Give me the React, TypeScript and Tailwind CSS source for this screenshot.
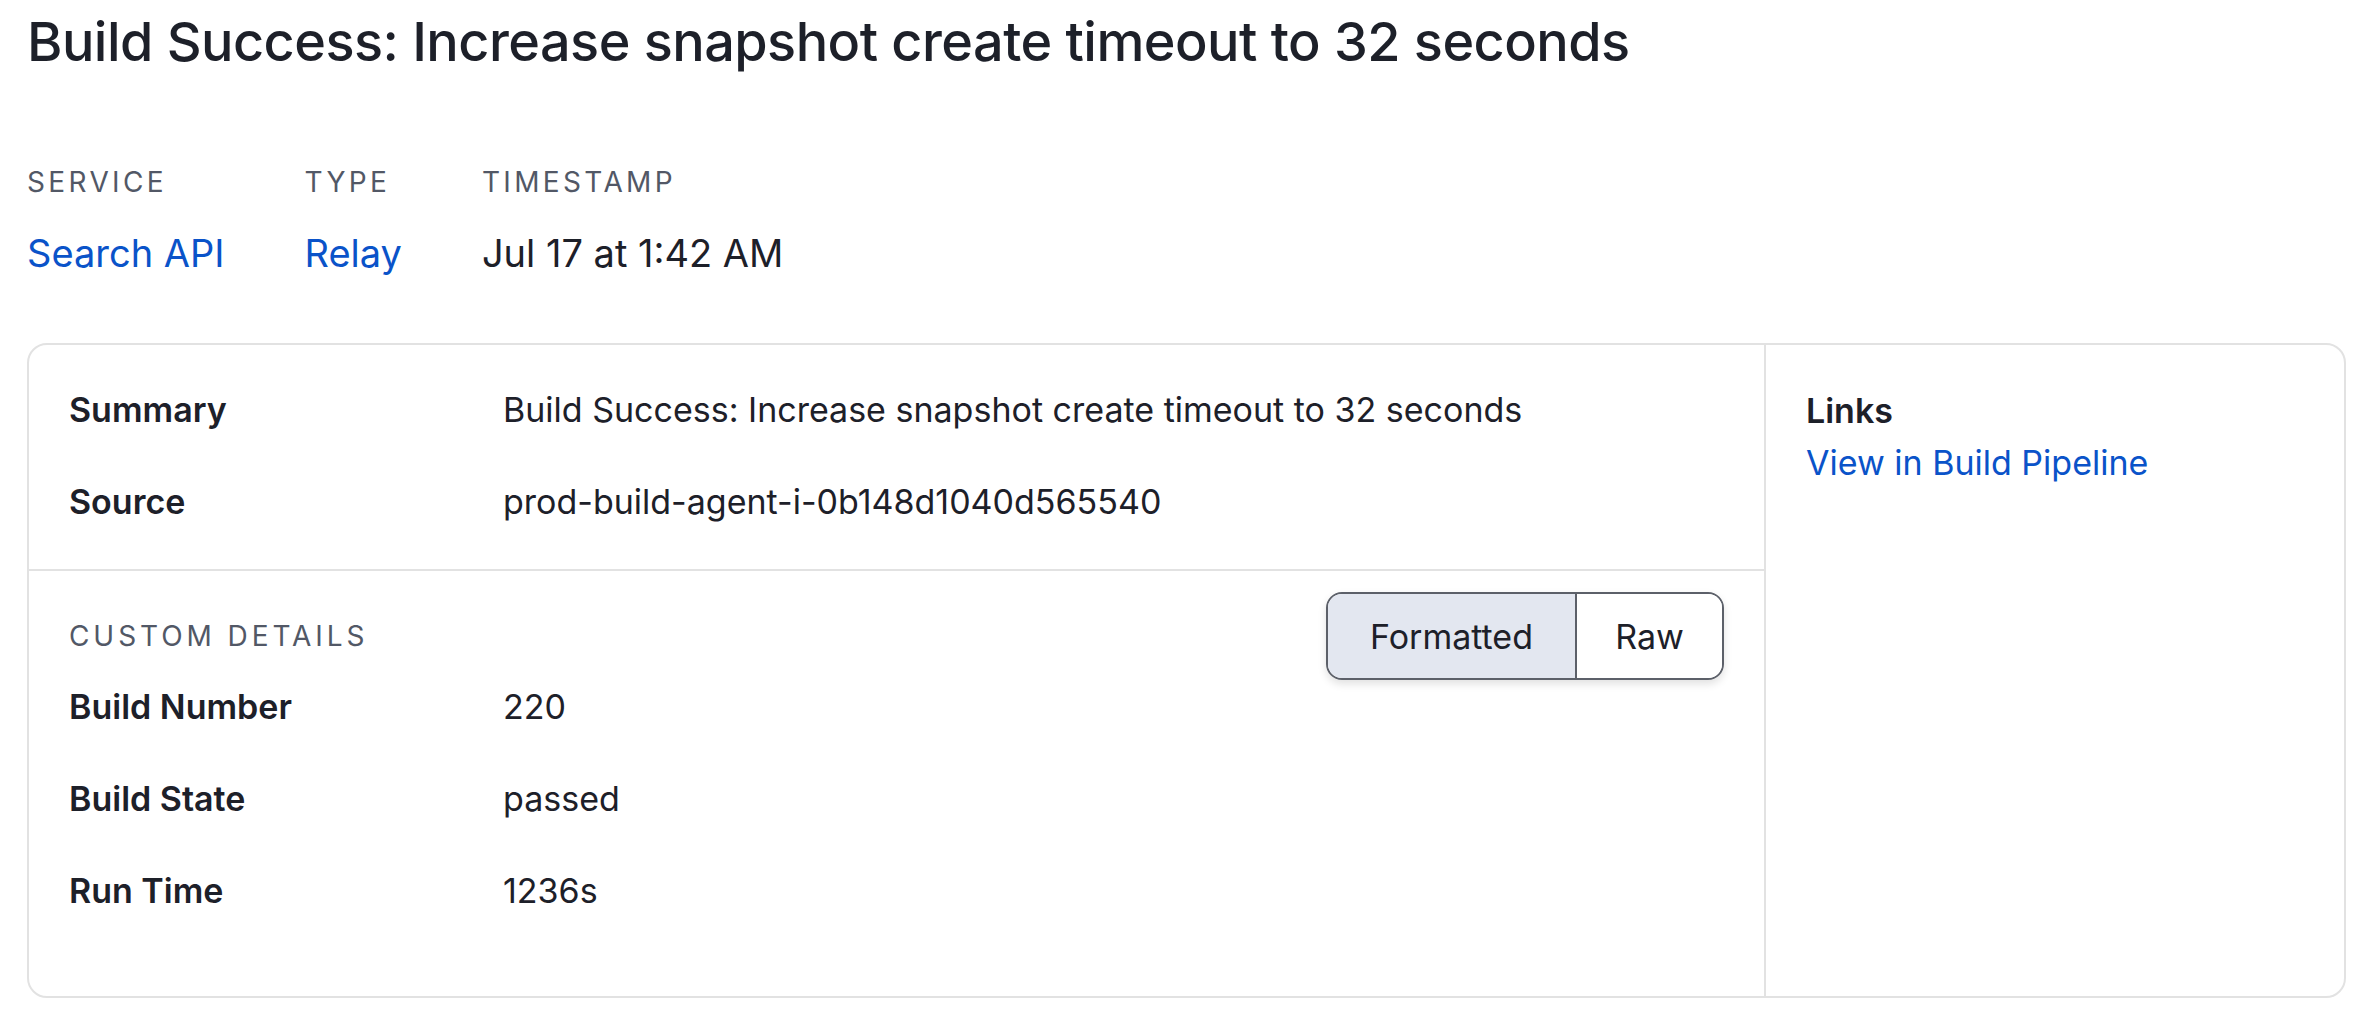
import React, { useState } from 'react';

const meta = [
  { label: 'SERVICE', value: 'Search API', link: true },
  { label: 'TYPE', value: 'Relay', link: true },
  { label: 'TIMESTAMP', value: 'Jul 17 at 1:42 AM', link: false },
];

const summaryRows = [
  { label: 'Summary', value: 'Build Success: Increase snapshot create timeout to 32 seconds' },
  { label: 'Source', value: 'prod-build-agent-i-0b148d1040d565540' },
];

const customRows = [
  { label: 'Build Number', value: '220' },
  { label: 'Build State', value: 'passed' },
  { label: 'Run Time', value: '1236s' },
];

function DetailRow({ label, value }: { label: string; value: string }) {
  return (
    <div className="grid grid-cols-[434px_1fr] py-[24px] text-[34px] leading-[44px] text-[#1d2029]">
      <div className="font-semibold">{label}</div>
      <div>{value}</div>
    </div>
  );
}

export default function App() {
  const [view, setView] = useState<'formatted' | 'raw'>('formatted');

  return (
    <div className="min-h-screen bg-white pl-[27px] pr-[30px] pt-[8px] font-['Inter',sans-serif] text-[#1d2029]">
      <h1 className="text-[54px] font-medium leading-[68px] tracking-[-0.01em]">
        Build Success: Increase snapshot create timeout to 32 seconds
      </h1>

      {/* Meta */}
      <div className="mt-[88px] flex gap-[80px]">
        {meta.map((m) => (
          <div key={m.label} className="flex flex-col">
            <div className="text-[28px] leading-[36px] tracking-[0.12em] text-[#525866]">{m.label}</div>
            <div
              className={`mt-[29px] text-[38px] leading-[48px] ${
                m.link ? 'text-[#0a53c9]' : 'text-[#1d2029]'
              }`}
            >
              {m.value}
            </div>
          </div>
        ))}
      </div>

      {/* Card */}
      <div className="mt-[66px] flex rounded-[20px] border-2 border-[#e2e2e2]">
        <div className="flex-1 border-r-2 border-[#e2e2e2]">
          <div className="px-[40px] pt-[19px] pb-[21px]">
            {summaryRows.map((r) => (
              <DetailRow key={r.label} label={r.label} value={r.value} />
            ))}
          </div>

          <div className="border-t-2 border-[#e2e2e2] px-[40px] pt-[21px] pb-[59px]">
            <div className="flex items-center justify-between">
              <div className="text-[28px] leading-[36px] tracking-[0.14em] text-[#525866]">CUSTOM DETAILS</div>
              <div className="flex h-[88px] overflow-hidden rounded-[16px] border-2 border-[#5c6069] shadow-[0_4px_8px_rgba(0,0,0,0.12)]">
                <button
                  onClick={() => setView('formatted')}
                  className={`w-[247px] text-[34px] ${
                    view === 'formatted' ? 'bg-[#e3e7f0]' : 'bg-white'
                  }`}
                >
                  Formatted
                </button>
                <button
                  onClick={() => setView('raw')}
                  className={`w-[147px] border-l-2 border-[#5c6069] text-[34px] ${
                    view === 'raw' ? 'bg-[#e3e7f0]' : 'bg-white'
                  }`}
                >
                  Raw
                </button>
              </div>
            </div>
            <div className="-mt-[19px]">
              {customRows.map((r) => (
                <DetailRow key={r.label} label={r.label} value={r.value} />
              ))}
            </div>
          </div>
        </div>

        <div className="w-[578px] px-[40px] pt-[44px]">
          <div className="text-[34px] font-semibold leading-[44px]">Links</div>
          <a href="#" className="mt-[8px] block text-[34px] leading-[44px] text-[#0a53c9]">
            View in Build Pipeline
          </a>
        </div>
      </div>
    </div>
  );
}
